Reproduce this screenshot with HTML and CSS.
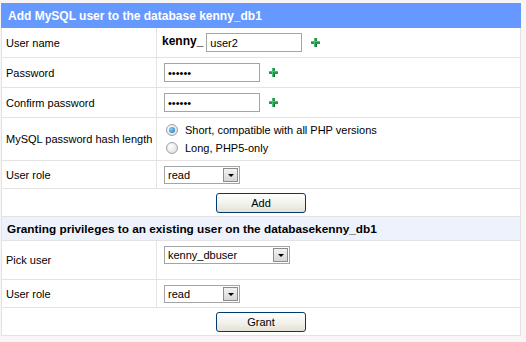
FILE: index.html
```html
<!DOCTYPE html>
<html>

<head>
    <meta charset='utf-8'>
    <title>MySQL users</title>

    <link rel="stylesheet" href="styles.css">
</head>

<body>
    <table class="form-table">
        <colgroup>
            <col class="col-label">
            <col>
        </colgroup>

        <!-- add a new user -->
        <tr class="head">
            <th colspan="2">Add MySQL user to the database kenny_db1</th>
        </tr>
        <tr class="row-30">
            <td class="label">User name</td>
            <td class="value">
                <b class="prefix">kenny_</b><input class="field" type="text" value="user2"><span class="plus"><svg width="9" height="9" viewBox="0 0 9 9"><rect x="3" y="0" width="3" height="9" fill="#23974c"/><rect x="0" y="3" width="9" height="3" fill="#23974c"/><rect x="3" y="0" width="1" height="9" fill="#4cc070"/><rect x="0" y="3" width="9" height="1" fill="#4cc070"/><rect x="5" y="6" width="1" height="3" fill="#0f6b30"/></svg></span>
            </td>
        </tr>
        <tr class="row-30">
            <td class="label">Password</td>
            <td class="value">
                <input class="field" type="password" value="secret"><span class="plus"><svg width="9" height="9" viewBox="0 0 9 9"><rect x="3" y="0" width="3" height="9" fill="#23974c"/><rect x="0" y="3" width="9" height="3" fill="#23974c"/><rect x="3" y="0" width="1" height="9" fill="#4cc070"/><rect x="0" y="3" width="9" height="1" fill="#4cc070"/><rect x="5" y="6" width="1" height="3" fill="#0f6b30"/></svg></span>
            </td>
        </tr>
        <tr class="row-30">
            <td class="label">Confirm password</td>
            <td class="value">
                <input class="field" type="password" value="secret"><span class="plus"><svg width="9" height="9" viewBox="0 0 9 9"><rect x="3" y="0" width="3" height="9" fill="#23974c"/><rect x="0" y="3" width="9" height="3" fill="#23974c"/><rect x="3" y="0" width="1" height="9" fill="#4cc070"/><rect x="0" y="3" width="9" height="1" fill="#4cc070"/><rect x="5" y="6" width="1" height="3" fill="#0f6b30"/></svg></span>
            </td>
        </tr>
        <tr class="row-43">
            <td class="label">MySQL password hash length</td>
            <td class="value">
                <div class="radio-row"><span class="radio checked"></span>Short, compatible with all PHP versions</div>
                <div class="radio-row"><span class="radio"></span>Long, PHP5-only</div>
            </td>
        </tr>
        <tr class="row-28">
            <td class="label">User role</td>
            <td class="value">
                <div class="select role"><span class="select-text">read</span><span class="arrow"></span></div>
            </td>
        </tr>
        <tr class="row-28">
            <td colspan="2" class="actions"><div class="button">Add</div></td>
        </tr>

        <!-- grant to an existing user -->
        <tr class="subhead">
            <th colspan="2">Granting privileges to an existing user on the databasekenny_db1</th>
        </tr>
        <tr class="row-39">
            <td class="label">Pick user</td>
            <td class="value top">
                <div class="select user"><span class="select-text">kenny_dbuser</span><span class="arrow"></span></div>
            </td>
        </tr>
        <tr class="row-28">
            <td class="label">User role</td>
            <td class="value">
                <div class="select role"><span class="select-text">read</span><span class="arrow"></span></div>
            </td>
        </tr>
        <tr class="row-28">
            <td colspan="2" class="actions"><div class="button">Grant</div></td>
        </tr>
    </table>
</body>

</html>
```

FILE: styles.css
```css
body {
    margin: 0;
    background: #f7f5f5;
    font-family: "Liberation Sans", Arial, sans-serif;
    font-size: 11px;
    color: #000;
}
.form-table {
    border-collapse: collapse;
    margin: 3px 0 0 1px;
    width: 520px;
    background: #fff;
    font-size: 11px;
}
.col-label {
    width: 155px;
}
.form-table td,
.form-table th {
    border: 1px solid #e4e2e2;
    padding: 0;
    line-height: 14px;
}
.head th {
    height: 23px;
    background: #6699ff;
    color: #fff;
    font-size: 12px;
    text-align: left;
    padding-left: 6px;
    border-color: #6699ff;
}
.subhead th {
    height: 23px;
    background: #eef2fc;
    color: #000;
    font-size: 11.8px;
    text-align: left;
    padding-left: 5px;
}
.row-30 td { height: 29px; }
.row-43 td { height: 42px; }
.row-28 td { height: 27px; }
.row-39 td { height: 33px; }
.label {
    padding-left: 4px !important;
}
.value {
    padding-left: 7px !important;
    white-space: nowrap;
}
.value.top {
    vertical-align: top;
    padding-top: 5px !important;
}
.prefix {
    font-size: 12px;
    margin: 0 3px 0 -2px;
}
.field {
    width: 96px;
    height: 19px;
    box-sizing: border-box;
    border: 1px solid #a5a5a5;
    padding: 0 3px;
    margin: 0;
    font-family: inherit;
    font-size: 11px;
    vertical-align: middle;
}
.plus {
    display: inline-block;
    margin-left: 9px;
    vertical-align: middle;
    line-height: 0;
}
.radio-row {
    display: flex;
    align-items: center;
    height: 18px;
}
.radio {
    width: 12px;
    height: 12px;
    border: 1px solid #9aa3ac;
    border-radius: 50%;
    background: radial-gradient(circle at 35% 35%, #ffffff, #d8d8d4);
    margin: 0 7px 0 2px;
    display: flex;
    align-items: center;
    justify-content: center;
    box-sizing: border-box;
}
.radio.checked::after {
    content: '';
    width: 6px;
    height: 6px;
    border-radius: 50%;
    background: radial-gradient(circle at 35% 35%, #7ed0ff, #1d6fbf);
}
.select {
    display: flex;
    align-items: center;
    height: 18px;
    box-sizing: border-box;
    border: 1px solid #a5a5a5;
    background: #fff;
}
.select.role {
    width: 76px;
}
.select.user {
    width: 126px;
}
.select-text {
    flex: 1;
    padding-left: 3px;
}
.arrow {
    width: 15px;
    height: 14px;
    margin-right: 1px;
    box-sizing: border-box;
    border: 1px solid #8c8c8c;
    background: linear-gradient(#f2f2f2, #d6d6d6);
    display: flex;
    align-items: center;
    justify-content: center;
}
.arrow::after {
    content: '';
    border-left: 3px solid transparent;
    border-right: 3px solid transparent;
    border-top: 3px solid #000;
    margin-top: 1px;
}
.actions {
    text-align: center;
}
.button {
    display: inline-block;
    width: 90px;
    height: 20px;
    line-height: 18px;
    box-sizing: border-box;
    border: 1px solid #003c74;
    border-radius: 3px;
    background: linear-gradient(#ffffff, #f0efe8 60%, #e4e1d4);
    font-size: 11px;
    vertical-align: middle;
}
```
